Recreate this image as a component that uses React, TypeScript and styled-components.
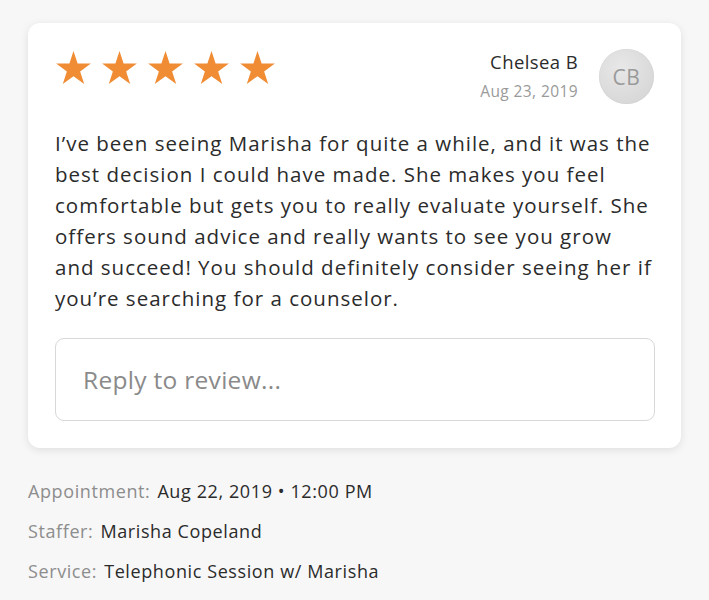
import React from "react";
import styled, { createGlobalStyle } from "styled-components";

const Global = createGlobalStyle`
  html, body { margin: 0; padding: 0; background: #f7f7f7; }
  body { font-family: "Open Sans", Lato, sans-serif; -webkit-font-smoothing: antialiased; }
`;

const Page = styled.div`
  padding: 23px 28px 0 28px;
  width: 709px;
  box-sizing: border-box;
`;

const Card = styled.div`
  background: #fff;
  border-radius: 12px;
  box-shadow: 0 2px 8px rgba(0, 0, 0, 0.1);
  padding: 27px 27px 27px 27px;
  width: 653px;
  box-sizing: border-box;
`;

const Header = styled.div`
  display: flex;
  justify-content: space-between;
  align-items: flex-start;
`;

const Stars = styled.div`
  display: flex;
  gap: 9px;
  padding-top: 1px;
`;

const Author = styled.div`
  display: flex;
  align-items: center;
  gap: 21px;
  margin-top: -1px;
`;

const AuthorText = styled.div`
  display: flex;
  flex-direction: column;
  align-items: flex-end;
`;

const Name = styled.div`
  font-size: 18.5px;
  letter-spacing: 0.4px;
  color: #2b2b2b;
  line-height: 24px;
`;

const DateText = styled.div`
  font-size: 15.5px;
  letter-spacing: 0.4px;
  color: #9a9a9a;
  line-height: 24px;
  margin-top: 5px;
`;

const Avatar = styled.div`
  width: 55px;
  height: 55px;
  border-radius: 50%;
  background: radial-gradient(circle at 40% 35%, #e8e8e8, #d2d2d2);
  box-shadow: inset 0 0 1px rgba(0,0,0,0.15);
  display: flex;
  align-items: center;
  justify-content: center;
  color: #9a9a9a;
  font-size: 21px;
  letter-spacing: 0.5px;
`;

const Body = styled.p`
  margin: 24px 0 0 0;
  font-size: 20.5px;
  letter-spacing: 1px;
  line-height: 31px;
  color: #2b2b2b;
  width: 597px;
`;

const Reply = styled.input`
  display: block;
  margin-top: 24px;
  width: 600px;
  height: 83px;
  box-sizing: border-box;
  border: 1.5px solid #d8d8d8;
  border-radius: 9px;
  padding: 0 27px;
  font-family: "Open Sans", sans-serif;
  font-size: 24.5px;
  letter-spacing: 0.3px;
  color: #333;
  background: #fff;
  outline: none;
  &::placeholder { color: #8a8a8a; }
`;

const Meta = styled.div`
  margin-top: 32px;
  display: flex;
  flex-direction: column;
  gap: 17px;
`;

const MetaRow = styled.div`
  font-size: 18px;
  letter-spacing: 0.6px;
  line-height: 23px;
  color: #2b2b2b;
  display: flex;
  gap: 7px;
`;

const Label = styled.span`
  color: #8d8d8d;
`;

const Star = () => (
  <svg width="37" height="33" viewBox="0 0 24 22.8">
    <path
      d="M12 0l2.83 8.7h9.17l-7.42 5.4 2.83 8.7L12 17.4l-7.41 5.4 2.83-8.7L0 8.7h9.17z"
      fill="#ef8c34"
    />
  </svg>
);

export default function App() {
  return (
    <>
      <Global />
      <Page>
        <Card>
          <Header>
            <Stars>
              <Star />
              <Star />
              <Star />
              <Star />
              <Star />
            </Stars>
            <Author>
              <AuthorText>
                <Name>Chelsea B</Name>
                <DateText>Aug 23, 2019</DateText>
              </AuthorText>
              <Avatar>CB</Avatar>
            </Author>
          </Header>
          <Body>
            I’ve been seeing Marisha for quite a while, and it was the best decision I could have made. She makes you feel comfortable but gets you to really evaluate yourself. She offers sound advice and really wants to see you grow and succeed! You should definitely consider seeing her if you’re searching for a counselor.
          </Body>
          <Reply placeholder="Reply to review..." />
        </Card>
        <Meta>
          <MetaRow>
            <Label>Appointment:</Label>
            <span>Aug 22, 2019 • 12:00 PM</span>
          </MetaRow>
          <MetaRow>
            <Label>Staffer:</Label>
            <span>Marisha Copeland</span>
          </MetaRow>
          <MetaRow>
            <Label>Service:</Label>
            <span>Telephonic Session w/ Marisha</span>
          </MetaRow>
        </Meta>
      </Page>
    </>
  );
}
